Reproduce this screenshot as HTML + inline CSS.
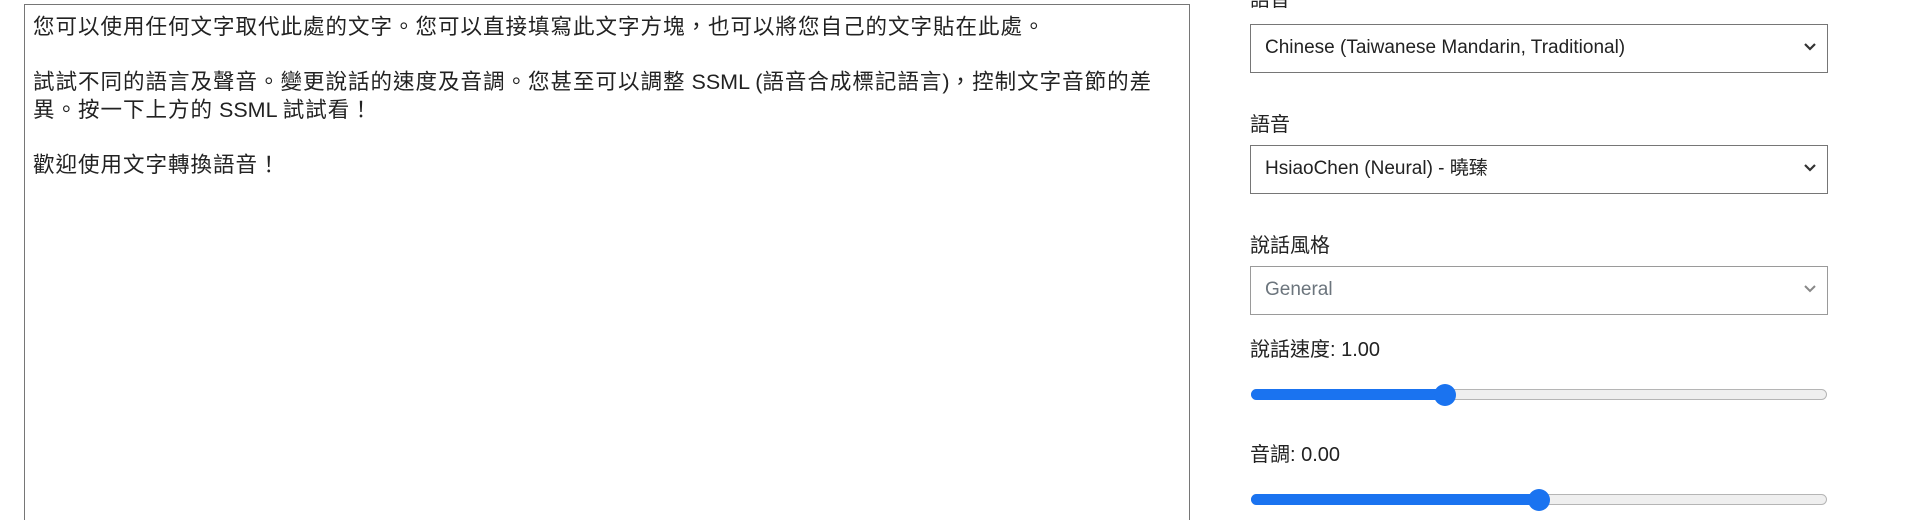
<!DOCTYPE html>
<html style="overflow:hidden;width:1920px;height:520px"><head><meta charset="utf-8"><style>
*{box-sizing:border-box;margin:0;padding:0}
body{width:1920px;height:520px;background:#fff;position:relative;overflow:hidden;font-family:"Liberation Sans","Noto Sans CJK TC",sans-serif;color:#212529}
.ta{position:absolute;left:24px;top:4px;width:1166px;height:530px;border:1.5px solid #767676;padding:9px 20px 9px 8px;font-size:21.5px;line-height:27.6px;color:#222;letter-spacing:1px}
.ta p{margin:0}
.ta span{letter-spacing:0}
.lbl{position:absolute;left:1250px;font-size:20px;line-height:24px;color:#222}
.sel{position:absolute;left:1250px;width:578px;height:49px;border:1.5px solid #767676;font-size:19px;line-height:46px;padding-left:14px;color:#222}
.sel svg{position:absolute;right:10px;top:17px}
.track{position:absolute;left:1251px;width:576px;height:11px;border:1px solid #b5b5b5;border-radius:6px;background:#efefef}
.fill{position:absolute;left:1251px;height:11px;border-radius:6px;background:#1a73f0}
.thumb{position:absolute;width:22px;height:22px;border-radius:50%;background:#1a73f0}
</style></head><body>
<div class="ta">
<p>您可以使用任何文字取代此處的文字。您可以直接填寫此文字方塊，也可以將您自己的文字貼在此處。</p>
<p>&nbsp;</p>
<p>試試不同的語言及聲音。變更說話的速度及音調。您甚至可以調整<span> SSML (</span>語音合成標記語言<span>)</span>，控制文字音節的差異。按一下上方的<span> SSML </span>試試看！</p>
<p>&nbsp;</p>
<p>歡迎使用文字轉換語音！</p>
</div>
<div class="lbl" style="top:-12px">語音</div>
<div class="sel" style="top:24px">Chinese (Taiwanese Mandarin, Traditional)<svg width="14" height="10" viewBox="0 0 14 10"><path d="M2 2l5 5 5-5" fill="none" stroke="#333" stroke-width="2.2"/></svg></div>
<div class="lbl" style="top:113px">語音</div>
<div class="sel" style="top:145px">HsiaoChen (Neural) - 曉臻<svg width="14" height="10" viewBox="0 0 14 10"><path d="M2 2l5 5 5-5" fill="none" stroke="#333" stroke-width="2.2"/></svg></div>
<div class="lbl" style="top:234px">說話風格</div>
<div class="sel" style="top:266px;color:#6c757d;border-color:#9a9a9a">General<svg width="14" height="10" viewBox="0 0 14 10"><path d="M2 2l5 5 5-5" fill="none" stroke="#888" stroke-width="2"/></svg></div>
<div class="lbl" style="top:338px">說話速度: 1.00</div>
<div class="track" style="top:389px"></div>
<div class="fill" style="top:389px;width:195px"></div>
<div class="thumb" style="left:1434px;top:384px"></div>
<div class="lbl" style="top:443px">音調: 0.00</div>
<div class="track" style="top:494px"></div>
<div class="fill" style="top:494px;width:288px"></div>
<div class="thumb" style="left:1528px;top:489px"></div>
</body></html>
